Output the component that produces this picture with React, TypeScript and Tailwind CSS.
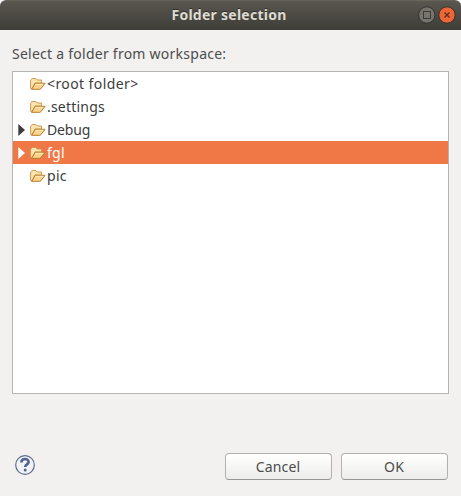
import React from "react";

type Row = { name: string; tracking: string; expandable?: boolean; selected?: boolean };

const rows: Row[] = [
  { name: "<root folder>", tracking: "tracking-[0.41px]" },
  { name: ".settings", tracking: "tracking-[0.2px]" },
  { name: "Debug", tracking: "tracking-[-0.15px]", expandable: true },
  { name: "fgl", tracking: "tracking-[0.3px]", expandable: true, selected: true },
  { name: "pic", tracking: "tracking-[0.3px]" },
];

function FolderIcon() {
  return (
    <svg width="16" height="14" viewBox="0 0 16 14" className="shrink-0">
      <path d="M0.6 11.3V3.2L2.3 1.5H5.8L7.2 3H11.5V6H5L2.2 12Z" fill="#fbe5ae" stroke="#cf9850" strokeLinejoin="round" />
      <path d="M1.6 12.3L5.2 6.3H15L11 11.6L9.8 12.3Z" fill="#fad48c" stroke="#b8782c" strokeLinejoin="round" />
      <path d="M5.6 7.3H13.2" stroke="#fff0c4" />
    </svg>
  );
}

function Button({ children }: { children: React.ReactNode }) {
  return (
    <button className="flex h-[27px] w-[107px] items-center justify-center rounded-[4px] border border-[#b3b1ae] border-b-[#989692] bg-linear-to-b from-white to-[#ededeb] pt-px text-[14px] leading-none">
      {children}
    </button>
  );
}

export default function App() {
  return (
    <div className="flex h-[496px] w-[461px] flex-col bg-white font-['Noto_Sans','Open_Sans',sans-serif] text-[14px] text-[#4c4c4c]">
      <header className="flex h-[30px] shrink-0 items-center rounded-t-[6px] border-t border-[#66635a] bg-linear-to-b from-[#5a574f] to-[#3e3d38] pr-[5px] pl-[40px]">
        <h1 className="grow pb-px text-center text-[14px] leading-[28px] font-bold text-[#dfdbd2] [text-shadow:0_-1px_0_#2e2d29]">
          <span className="tracking-[0.26px]">Folder selection</span>
        </h1>
        <svg width="38" height="20" viewBox="0 0 38 20" className="mb-px">
          <circle cx="8.8" cy="10" r="8.2" fill="#76746c" stroke="#33322e" />
          <rect x="5.5" y="6.5" width="7" height="7" fill="none" stroke="#3b3a35" />
          <circle cx="29" cy="10" r="8.2" fill="#ee6637" stroke="#33322e" />
          <path d="M26.5 7.5L31.5 12.5M31.5 7.5L26.5 12.5" stroke="#55301b" strokeWidth="1.3" />
        </svg>
      </header>
      <main className="flex grow flex-col bg-[#f2f1f0] px-3">
        <p className="mt-[13px] h-[28px] leading-[22px] whitespace-nowrap">
          <span className="tracking-[0.25px]">Select a folder from workspace:</span>
        </p>
        <div className="h-[323px] w-[437px] border border-[#b6b5b1] bg-white text-[#3c3c3c]">
          {rows.map((row) => (
            <div key={row.name} className={`flex h-[23px] items-center pl-[5px] ${row.selected ? "bg-[#f07746] text-white" : ""}`}>
              <svg width="12" height="14" viewBox="0 0 12 14" className="shrink-0">
                {row.expandable && <path d="M0.3 1V13L7 7Z" fill="currentColor" />}
              </svg>
              <FolderIcon />
              <span className={`ml-px leading-[22px] whitespace-nowrap ${row.tracking}`}>{row.name}</span>
            </div>
          ))}
        </div>
        <footer className="mt-[59px] flex gap-[9px]">
          <svg width="22" height="22" viewBox="0 0 22 22" className="mt-px mr-auto ml-[2px]">
            <circle cx="11" cy="11" r="9.3" fill="#f1f3f7" stroke="#5c6c8e" strokeWidth="1.2" />
            <path d="M7.4 8.4C7.4 3.9 14.6 4 14.6 8C14.6 10.4 11.2 10.4 11.2 13.1" fill="none" stroke="#50648e" strokeWidth="2.6" />
            <circle cx="11.2" cy="16.1" r="1.5" fill="#50648e" />
          </svg>
          <Button><span className="mr-px tracking-[0.15px]">Cancel</span></Button>
          <div className="mr-px"><Button><span className="mr-px tracking-[0.2px]">OK</span></Button></div>
        </footer>
      </main>
    </div>
  );
}
